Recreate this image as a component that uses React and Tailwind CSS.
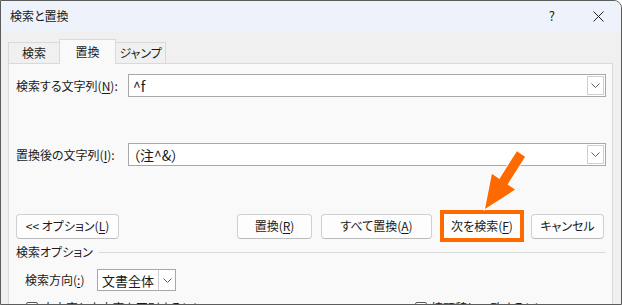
import React from "react";

const U = ({ children }) => (
    <span className="underline underline-offset-2 decoration-1">{children}</span>
);

const Chevron = () => (
    <svg width="9" height="5" viewBox="0 0 9 5">
        <polyline points="0.5,0.5 4.5,4.5 8.5,0.5" fill="none" stroke="#606060" strokeWidth="1" />
    </svg>
);

const ComboBox = ({ value }) => (
    <div className="flex-1 h-full border border-[#a8a8a8] bg-white flex items-center">
        <span className="flex-1 pl-[4px] text-[14px] leading-none">{value}</span>
        <div className="w-[17px] h-[19px] mr-[1px] border border-[#cfcfcf] bg-white flex items-center justify-center">
            <Chevron />
        </div>
    </div>
);

const Button = ({ className = "", children }) => (
    <button className={`h-[25px] rounded-[4px] border border-[#d0d0d0] border-b-[#bcbcbc] bg-[#fdfdfd] text-[12px] leading-none flex items-center justify-center ${className}`}>
        {children}
    </button>
);

const CheckBox = ({ children }) => (
    <div className="flex items-center">
        <div className="w-[12px] h-[12px] border border-[#5a5a5a] rounded-[2px] bg-white" />
        <span className="ml-[4px]">{children}</span>
    </div>
);

export default function App() {
    return (
        <div className="w-[622px] h-[305px] bg-white font-['Noto_Sans_CJK_JP','Noto_Sans',sans-serif] [font-feature-settings:'palt'] text-[12px] text-[#1a1a1a]">
            <div className="relative w-[622px] h-[305px] border border-[#5c5c5c] rounded-tr-[8px] overflow-hidden flex flex-col bg-[#f0f0f0]">
                {/* title bar */}
                <div className="h-[30px] shrink-0 bg-[#eef2fa] flex items-center pl-[9px]">
                    <span className="text-[12px]">検索と置換</span>
                    <span className="ml-auto text-[13px] mr-[38px]">?</span>
                    <svg width="11" height="11" viewBox="0 0 11 11" className="mr-[17px]">
                        <path d="M0.5 0.5 L10.5 10.5 M10.5 0.5 L0.5 10.5" stroke="#222" strokeWidth="1" />
                    </svg>
                </div>

                {/* body */}
                <div className="flex-1 flex flex-col pl-[7px] pr-[8px]">
                    <div className="h-[33px] -mb-px flex items-end relative z-10">
                        <div className="w-[52px] h-[22px] border border-[#d9d9d9] bg-[#f0f0f0] flex items-center justify-center">検索</div>
                        <div className="w-[57px] h-[25px] -ml-px border border-b-0 border-[#d9d9d9] bg-[#f9f9f9] flex items-center justify-center pb-[1px]">置換</div>
                        <div className="w-[51px] h-[22px] -ml-px border border-[#d9d9d9] bg-[#f0f0f0] flex items-center justify-center">ジャンプ</div>
                    </div>

                    <div className="flex-1 border border-[#d9d9d9] bg-[#f9f9f9] pl-[7px] pr-[6px] flex flex-col">
                        <div className="mt-[10px] h-[23px] flex items-center">
                            <span className="w-[112px]">検索する文字列(<U>N</U>):</span>
                            <ComboBox value="^f" />
                        </div>

                        <div className="mt-[46px] h-[23px] flex items-center">
                            <span className="w-[112px]">置換後の文字列(<U>I</U>):</span>
                            <ComboBox value="（注^&）" />
                        </div>

                        <div className="mt-[44px] h-[32px] flex items-center">
                            <Button className="w-[103px]">&lt;&lt; オプション(<U>L</U>)</Button>
                            <Button className="w-[75px] ml-[118px]">置換(<U>R</U>)</Button>
                            <Button className="w-[111px] ml-[9px]">すべて置換(<U>A</U>)</Button>
                            <div className="w-[84px] h-[32px] ml-[8px] border-4 border-[#ff6a00] bg-white flex items-center justify-center">
                                次を検索(<U>F</U>)
                            </div>
                            <Button className="w-[73px] ml-[7px]">キャンセル</Button>
                        </div>

                        <div className="mt-[2px] h-[16px] flex items-center">
                            <span>検索オプション</span>
                            <div className="flex-1 h-px ml-[5px] bg-[#dcdcdc]" />
                        </div>

                        <div className="mt-[9px] h-[22px] flex items-center pl-[9px]">
                            <span className="w-[72px]">検索方向(<U>:</U>)</span>
                            <div className="w-[79px] h-full border border-[#a8a8a8] bg-white flex items-center">
                                <span className="flex-1 pl-[4px] text-[13px] leading-none">文書全体</span>
                                <div className="w-[17px] h-full border-l border-[#cfcfcf] flex items-center justify-center">
                                    <Chevron />
                                </div>
                            </div>
                        </div>

                        <div className="mt-[8px] flex items-center pl-[10px]">
                            <div className="w-[389px]">
                                <CheckBox>大文字と小文字を区別する(<U>H</U>)</CheckBox>
                            </div>
                            <CheckBox>接頭辞に一致する(<U>X</U>)</CheckBox>
                        </div>
                    </div>
                </div>

                {/* callout arrow */}
                <svg className="absolute left-[-1px] top-[-1px] pointer-events-none" width="622" height="305" viewBox="0 0 622 305">
                    <polygon
                        points="516.9,151.2 525.1,156.8 507.6,184.5 515.1,189.6 485,209 491.9,173.8 499.4,178.9"
                        fill="#ff6a00"
                        stroke="#ffffff"
                        strokeWidth="2"
                        strokeLinejoin="miter"
                        paintOrder="stroke"
                    />
                </svg>
            </div>
        </div>
    );
}
